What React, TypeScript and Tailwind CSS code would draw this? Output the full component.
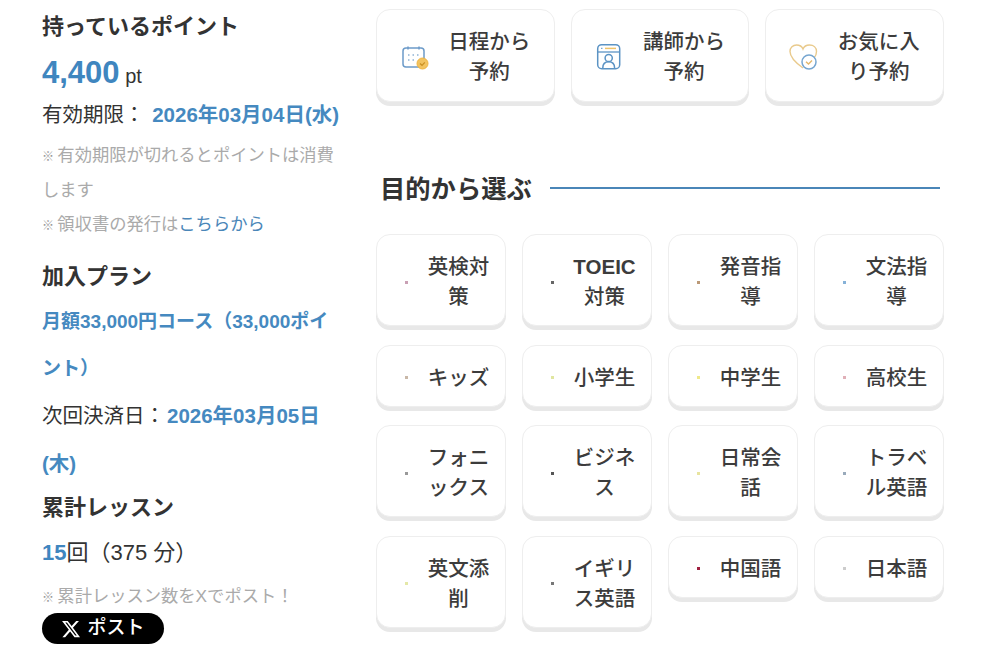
const sans = "font-['Liberation_Sans','Noto_Sans_CJK_JP',sans-serif]"

function CalendarIcon() {
  return (
    <svg width="30" height="30" viewBox="-1 -4 30 30" fill="none">
      <rect x="3" y="4" width="21" height="19" rx="3" stroke="#6c9bc9" strokeWidth="1.5" />
      <path d="M8 2.5v3M19 2.5v3" stroke="#6c9bc9" strokeWidth="1.5" />
      <path d="M8 11h1.5M12.5 11H14M17 11h1.5M8 16h1.5M12.5 16H14" stroke="#8fb2d4" strokeWidth="1.5" />
      <circle cx="22.5" cy="19.5" r="5.5" fill="#f2c360" stroke="#efb441" />
      <path d="M20 19.5l2 1.8 2.8-3" stroke="#c98f22" strokeWidth="1.2" />
    </svg>
  )
}

function TeacherIcon() {
  return (
    <svg width="30" height="30" viewBox="0 -2 30 30" fill="none">
      <rect x="3.7" y="2.7" width="22" height="24" rx="4" stroke="#5b93c4" strokeWidth="1.5" />
      <path d="M3.7 10h22" stroke="#5b93c4" strokeWidth="1.3" />
      <path d="M7 6.4h1.5" stroke="#7aa7cf" strokeWidth="1.3" />
      <path d="M11 6.4h11" stroke="#eec36a" strokeWidth="1.5" />
      <circle cx="14.7" cy="16" r="3.6" stroke="#5b93c4" strokeWidth="1.5" />
      <path d="M8.8 26c0-4 2.4-6.3 5.9-6.3s5.9 2.3 5.9 6.3" stroke="#5b93c4" strokeWidth="1.5" />
    </svg>
  )
}

function HeartIcon() {
  return (
    <svg width="30" height="30" viewBox="-1 -2 30 30" fill="none">
      <path
        d="M14 26C7 21 1 16 1 9.500C1 5.500 4 3 7.500 3C10.500 3 13 4.500 14 7C15 4.500 17.500 3 20.500 3C24.500 3 27.500 5.500 27.500 9.500C27.500 12 26.500 14.500 25 16"
        stroke="#e9ca8c"
        strokeWidth="1.4"
      />
      <circle cx="20" cy="20" r="7" fill="#fff" stroke="#76a6d0" strokeWidth="1.5" />
      <path d="M17 19.700l2.500 2.300 3.500-3.500" stroke="#e2b76c" strokeWidth="1.4" />
    </svg>
  )
}

function XIcon() {
  return (
    <svg width="20" height="20" viewBox="0 0 24 24" fill="#fff">
      <path d="M18.244 2.250h3.308l-7.227 8.260 8.502 11.240H16.170l-5.214-6.817L4.990 21.750H1.680l7.730-8.835L1.254 2.250H8.080l4.713 6.231zm-1.161 17.520h1.833L7.084 4.126H5.117z" />
    </svg>
  )
}

const topLinks = [
  { label: '日程から予約', icon: <CalendarIcon /> },
  { label: '講師から予約', icon: <TeacherIcon /> },
  { label: 'お気に入り予約', icon: <HeartIcon /> }
]

const purposes = [
  { label: '英検対策', dot: 'bg-[#c9a0b4]' },
  {
    label: (
      <>
        <span className="font-['Liberation_Sans',sans-serif] font-bold leading-none">TOEIC</span>対策
      </>
    ),
    dot: 'bg-[#666666]'
  },
  { label: '発音指導', dot: 'bg-[#bb9977]' },
  { label: '文法指導', dot: 'bg-[#86b2d8]' },
  { label: 'キッズ', dot: 'bg-[#c9b8a8]' },
  { label: '小学生', dot: 'bg-[#e0e6a0]' },
  { label: '中学生', dot: 'bg-[#efe98a]' },
  { label: '高校生', dot: 'bg-[#e0b0b8]' },
  { label: 'フォニックス', dot: 'bg-[#999999]' },
  { label: 'ビジネス', dot: 'bg-[#555555]' },
  { label: '日常会話', dot: 'bg-[#e8e4a0]' },
  { label: 'トラベル英語', dot: 'bg-[#99aabb]' },
  { label: '英文添削', dot: 'bg-[#e4e8a8]' },
  { label: 'イギリス英語', dot: 'bg-[#777777]' },
  { label: '中国語', dot: 'bg-[#a02040]' },
  { label: '日本語', dot: 'bg-[#cccccc]' }
]

function Note({ children }: { children: React.ReactNode }) {
  return (
    <p className="text-[17.300px] leading-[34.500px] text-[#aaaaaa]">
      <span className="text-[12px] leading-none text-[#999999]">※ </span>
      {children}
    </p>
  )
}

export default function App() {
  return (
    <div className={`flex w-[1000px] h-[670px] overflow-hidden bg-white text-[#333333] ${sans}`}>
      {/* Left column */}
      <aside className="w-[376px] shrink-0 pl-[42px] pr-[36px] pt-[9px]">
        <h3 className="text-[22px] leading-[36px] font-bold">持っているポイント</h3>
        <p className="mt-[6px] leading-[44px] text-[20px]">
          <span className="text-[31px] font-bold text-[#3f86bf]">4,400</span> pt
        </p>
        <p className="mt-[-2px] text-[20.500px] leading-[38px]">
          有効期限： <span className="ml-[2px] font-bold text-[#4589c0]">2026年03月04日(水)</span>
        </p>
        <div className="mt-[4px]">
          <Note>有効期限が切れるとポイントは消費します</Note>
          <Note>
            領収書の発行は<span className="text-[#4a86b8]">こちらから</span>
          </Note>
        </div>

        <h3 className="mt-[17px] text-[22px] leading-[36px] font-bold">加入プラン</h3>
        <p className="mt-[3px] text-[19px] leading-[47px] font-bold text-[#4589c0]">
          月額33,000円コース（33,000ポイント）
        </p>
        <p className="text-[20.500px] leading-[48px]">
          次回決済日：<span className="ml-[2px] font-bold text-[#4589c0]">2026年03月05日(木)</span>
        </p>

        <h3 className="mt-[2px] text-[22px] leading-[36px] font-bold">累計レッスン</h3>
        <p className="mt-[8px] text-[22px] leading-[38px]">
          <span className="font-bold text-[#3f86bf]">15</span>回（375 分）
        </p>
        <div className="mt-[7px]">
          <Note>累計レッスン数をXでポスト！</Note>
        </div>
        <button className="flex items-center justify-center gap-[6px] w-[122px] h-[31px] rounded-full bg-black text-white text-[19px] font-medium">
          <XIcon />
          ポスト
        </button>
      </aside>

      {/* Right column */}
      <main className="w-[568px] shrink-0 pt-[9px]">
        <div className="grid grid-cols-3 gap-[16px]">
          {topLinks.map((link) => (
            <a
              key={link.label}
              className="flex items-center pl-[22px] pr-[16px] pt-[15px] pb-[16px] rounded-[14px] border border-[#eeeeee] bg-white shadow-[0_4px_0_#e8e8e8] font-['Noto_Sans_CJK_JP',sans-serif] font-medium text-[#3c3c3c]"
            >
              <span className="shrink-0 w-[30px] h-[30px]">{link.icon}</span>
              <span className="flex-1 ml-[12px] text-center text-[20.500px] leading-[30px]">{link.label}</span>
            </a>
          ))}
        </div>

        <div className="flex items-center gap-[18px] mt-[69px] mb-[27px] pl-[4px] pr-[4px]">
          <h2 className="text-[25.300px] leading-[36px] font-bold shrink-0">目的から選ぶ</h2>
          <div className="flex-1 h-[2px] mb-[2px] bg-[#4a86b8]" />
        </div>

        <div className="grid grid-cols-4 gap-x-[16px] gap-y-[18.500px] items-start">
          {purposes.map((item, i) => (
            <a
              key={i}
              className="flex items-center pl-[28px] pr-[15px] py-[15px] rounded-[14px] border border-[#eeeeee] bg-white shadow-[0_4px_0_#e8e8e8] font-['Noto_Sans_CJK_JP',sans-serif] font-medium text-[#3c3c3c]"
            >
              <span className={`shrink-0 mt-[4px] w-[3px] h-[3px] ${item.dot}`} />
              <span className="flex-1 ml-[19px] text-center text-[20.500px] leading-[30px]">{item.label}</span>
            </a>
          ))}
        </div>
      </main>
    </div>
  )
}
